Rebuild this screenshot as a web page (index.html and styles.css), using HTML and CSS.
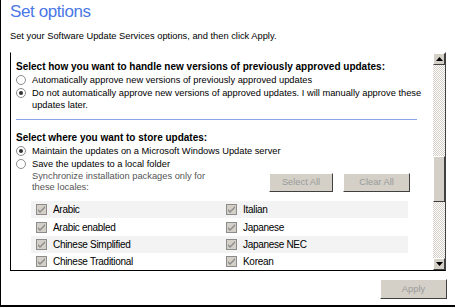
FILE: index.html
```html
<!DOCTYPE html>
<html lang="en">
<head>
    <meta charset="UTF-8">
    <title>Set options</title>
    <link rel="stylesheet" href="styles.css">
</head>
<body>
    <div class="page">
        <h1 class="title">Set options</h1>
        <p class="intro">Set your Software Update Services options, and then click Apply.</p>

        <div class="panel">
            <div class="panel-body">
                <div class="section">
                    <h2 class="section-title">Select how you want to handle new versions of previously approved updates:</h2>
                    <label class="radio-row"><span class="radio"></span>Automatically approve new versions of previously approved updates</label>
                    <label class="radio-row"><span class="radio checked"></span>Do not automatically approve new versions of approved updates. I will manually approve these updates later.</label>
                </div>
                <hr class="divider">
                <div class="section">
                    <h2 class="section-title">Select where you want to store updates:</h2>
                    <label class="radio-row"><span class="radio checked"></span>Maintain the updates on a Microsoft Windows Update server</label>
                    <label class="radio-row"><span class="radio"></span>Save the updates to a local folder</label>
                    <div class="locales-head">
                        <p class="locales-note">Synchronize installation packages only for these locales:</p>
                        <div class="buttons">
                            <button class="btn" disabled>Select All</button>
                            <button class="btn" disabled>Clear All</button>
                        </div>
                    </div>
                    <div class="locales">
                        <div class="locale shaded"><span class="check"><svg width="9" height="9" viewBox="0 0 9 9"><path d="M1 4l2 2 5-5v2L3 8 1 6z" fill="#8c8c8c"/></svg></span>Arabic</div>
                        <div class="locale shaded"><span class="check"><svg width="9" height="9" viewBox="0 0 9 9"><path d="M1 4l2 2 5-5v2L3 8 1 6z" fill="#8c8c8c"/></svg></span>Italian</div>
                        <div class="locale"><span class="check"><svg width="9" height="9" viewBox="0 0 9 9"><path d="M1 4l2 2 5-5v2L3 8 1 6z" fill="#8c8c8c"/></svg></span>Arabic enabled</div>
                        <div class="locale"><span class="check"><svg width="9" height="9" viewBox="0 0 9 9"><path d="M1 4l2 2 5-5v2L3 8 1 6z" fill="#8c8c8c"/></svg></span>Japanese</div>
                        <div class="locale shaded"><span class="check"><svg width="9" height="9" viewBox="0 0 9 9"><path d="M1 4l2 2 5-5v2L3 8 1 6z" fill="#8c8c8c"/></svg></span>Chinese Simplified</div>
                        <div class="locale shaded"><span class="check"><svg width="9" height="9" viewBox="0 0 9 9"><path d="M1 4l2 2 5-5v2L3 8 1 6z" fill="#8c8c8c"/></svg></span>Japanese NEC</div>
                        <div class="locale"><span class="check"><svg width="9" height="9" viewBox="0 0 9 9"><path d="M1 4l2 2 5-5v2L3 8 1 6z" fill="#8c8c8c"/></svg></span>Chinese Traditional</div>
                        <div class="locale"><span class="check"><svg width="9" height="9" viewBox="0 0 9 9"><path d="M1 4l2 2 5-5v2L3 8 1 6z" fill="#8c8c8c"/></svg></span>Korean</div>
                    </div>
                </div>
            </div>
            <div class="scrollbar">
                <div class="sb-btn"><svg width="7" height="4" viewBox="0 0 7 4"><path d="M3.5 0L7 4H0z" fill="#000"/></svg></div>
                <div class="sb-track">
                    <div class="sb-thumb"></div>
                </div>
                <div class="sb-btn"><svg width="7" height="4" viewBox="0 0 7 4"><path d="M0 0h7L3.5 4z" fill="#000"/></svg></div>
            </div>
        </div>

        <div class="footer">
            <button class="btn apply" disabled>Apply</button>
        </div>
    </div>
</body>
</html>
```

FILE: styles.css
```css
html, body {
    margin: 0;
    padding: 0;
    background: #fff;
}
body {
    font-family: 'Liberation Sans', Arial, sans-serif;
    font-size: 9.3px;
    color: #000;
}
.page {
    width: 455px;
    height: 307px;
    box-sizing: border-box;
    border-left: 1px solid #000;
    border-bottom: 2px solid #000;
    padding: 0 0 0 9px;
}
.title {
    margin: 0;
    padding-top: 2px;
    font-size: 17px;
    font-weight: normal;
    color: #4a78e6;
    line-height: 20px;
    letter-spacing: -0.4px;
}
.intro {
    margin: 8px 0 0 0;
    line-height: 12px;
}
.panel {
    display: flex;
    margin-top: 10px;
    width: 436px;
    height: 219px;
    box-sizing: border-box;
    border-left: 1px solid #000;
    border-bottom: 1px solid #000;
    border-right: 1px solid #404040;
    border-top: 1px solid #fff;
}
.panel-body {
    flex: 1;
    padding: 6px 8px 0 5px;
    overflow: hidden;
}
.section-title {
    margin: 2px 0 0 0;
    font-size: 10px;
    font-weight: bold;
    line-height: 12px;
}
.radio-row {
    display: block;
    position: relative;
    margin-top: 1px;
    padding-left: 16px;
    line-height: 12px;
}
.radio {
    position: absolute;
    left: 0;
    top: 1px;
    width: 8px;
    height: 8px;
    border: 1px solid #8c8c8c;
    border-radius: 50%;
    background: #fff;
}
.radio.checked::after {
    content: "";
    position: absolute;
    left: 2px;
    top: 2px;
    width: 4px;
    height: 4px;
    border-radius: 50%;
    background: #333;
}
.divider {
    margin: 8px 8px 12px 0;
    border: 0;
    border-top: 1px solid #8aa6e6;
}
.section + .divider + .section .section-title {
    margin-top: 0;
}
.locales-head {
    display: flex;
    align-items: center;
    justify-content: space-between;
    padding: 1px 15px 0 16px;
}
.locales-note {
    margin: 0;
    width: 175px;
    color: #555;
    line-height: 11px;
}
.buttons {
    display: flex;
    gap: 10px;
}
.btn {
    font-family: inherit;
    font-size: 9.3px;
    color: #9a9a9a;
    background: #d4d0c8;
    border: 1px solid;
    border-color: #fff #404040 #404040 #fff;
    padding: 0;
    width: 64px;
    height: 19px;
}
.btn + .btn {
    width: 67px;
}
.locales {
    display: grid;
    grid-template-columns: 190px 187px;
    margin: 8px 0 0 15px;
}
.locale {
    display: flex;
    align-items: center;
    height: 17.4px;
    font-size: 10px;
    letter-spacing: -0.3px;
}
.locale.shaded {
    background: #f3f3f3;
}
.check {
    display: flex;
    width: 9px;
    height: 9px;
    margin: 0 6px 0 5px;
    border: 1px solid #8c8c8c;
    background: #d4d0c8;
}
.scrollbar {
    width: 12px;
    display: flex;
    flex-direction: column;
}
.sb-btn {
    height: 12px;
    box-sizing: border-box;
    background: #d4d0c8;
    border: 1px solid;
    border-color: #fff #404040 #404040 #fff;
    display: flex;
    align-items: center;
    justify-content: center;
}
.sb-track {
    flex: 1;
    position: relative;
    background: repeating-conic-gradient(#fff 0 25%, #d4d0c8 0 50%) 0 0 / 2px 2px;
}
.sb-thumb {
    position: absolute;
    left: 0;
    right: 0;
    top: 91px;
    height: 46px;
    box-sizing: border-box;
    background: #d4d0c8;
    border: 1px solid;
    border-color: #fff #404040 #404040 #fff;
}
.footer {
    display: flex;
    justify-content: flex-end;
    padding: 8px 8px 0 0;
}
.btn.apply {
    width: 67px;
    height: 20px;
}
```
